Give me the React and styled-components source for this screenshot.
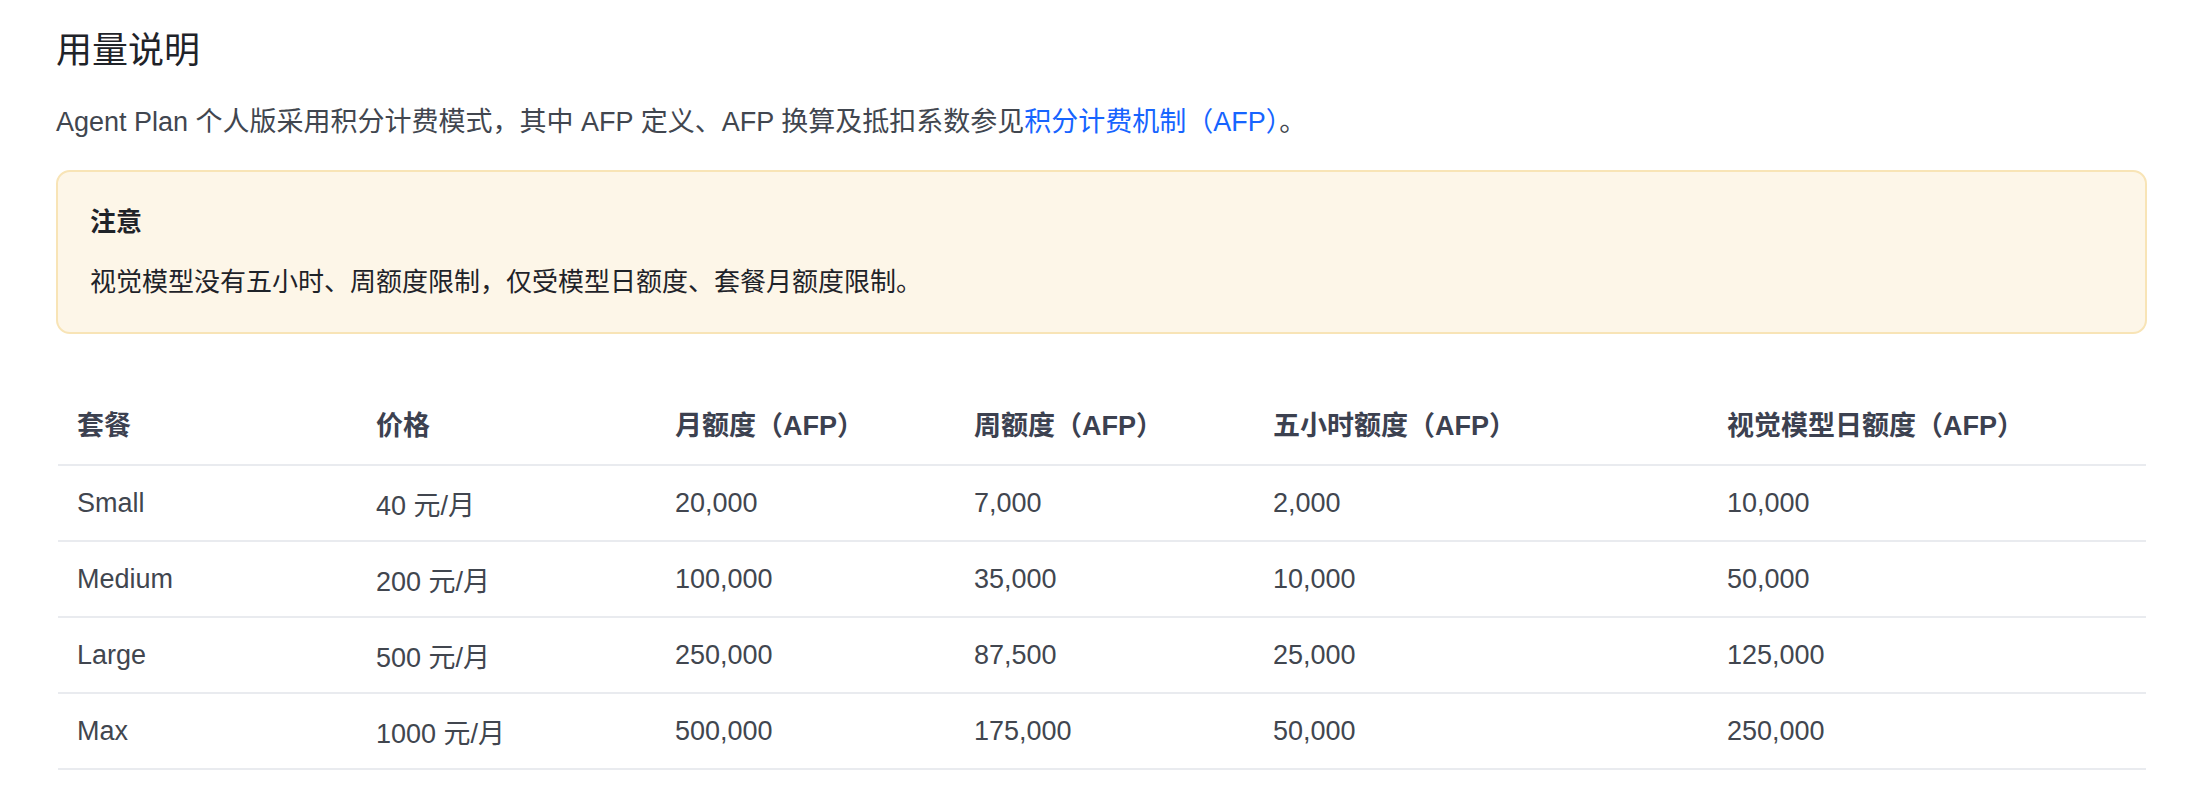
import React from "react";
import styled, { createGlobalStyle } from "styled-components";

const Global = createGlobalStyle`
  body { margin: 0; background: #fff; font-family: "Liberation Sans", "Noto Sans CJK SC", sans-serif; }
`;
const Page = styled.div`padding: 27px 38px 0 56px;`;
const Title = styled.h2`margin: 0; font-size: 36px; font-weight: 400; line-height: 48px; color: #1f2329;`;
const Para = styled.p`margin: 27px 0 0; font-size: 27px; line-height: 40px; color: #41464f;`;
const Link = styled.a`color: #1664ff; text-decoration: none;`;
const Notice = styled.div`
  margin-top: 28px; background: #fdf6e8; border: 2px solid #f8e4b6; border-radius: 14px;
  padding: 33px 32px 33px; color: #1f2329;
`;
const NoticeTitle = styled.div`font-weight: 700; font-size: 26px; line-height: 34px;`;
const NoticeText = styled.div`margin-top: 26px; font-size: 26px; line-height: 34px;`;
const Table = styled.table`
  margin-top: 48px; margin-left: 2px; width: 2088px; border-collapse: collapse; table-layout: fixed;
`;
const Th = styled.th`
  text-align: left; font-weight: 700; font-size: 27px; color: #3c4150; height: 82px; padding: 0 19px;
  border-bottom: 2px solid #e9ebef;
`;
const Td = styled.td`
  font-size: 27px; color: #41464f; height: 74px; padding: 0 19px; border-bottom: 2px solid #e9ebef;
`;

const widths = [299, 299, 299, 299, 454, 438];
const heads = ["套餐", "价格", "月额度（AFP）", "周额度（AFP）", "五小时额度（AFP）", "视觉模型日额度（AFP）"];
const rows = [
  ["Small", "40 元/月", "20,000", "7,000", "2,000", "10,000"],
  ["Medium", "200 元/月", "100,000", "35,000", "10,000", "50,000"],
  ["Large", "500 元/月", "250,000", "87,500", "25,000", "125,000"],
  ["Max", "1000 元/月", "500,000", "175,000", "50,000", "250,000"],
];

export default function App() {
  return (
    <Page>
      <Global />
      <Title>用量说明</Title>
      <Para>
        Agent Plan 个人版采用积分计费模式，其中 AFP 定义、AFP 换算及抵扣系数参见<Link href="#">积分计费机制（AFP）</Link>。
      </Para>
      <Notice>
        <NoticeTitle>注意</NoticeTitle>
        <NoticeText>视觉模型没有五小时、周额度限制，仅受模型日额度、套餐月额度限制。</NoticeText>
      </Notice>
      <Table>
        <colgroup>{widths.map((w, i) => <col key={i} style={{ width: w }} />)}</colgroup>
        <thead><tr>{heads.map(h => <Th key={h}>{h}</Th>)}</tr></thead>
        <tbody>
          {rows.map(r => <tr key={r[0]}>{r.map((c, i) => <Td key={i}>{c}</Td>)}</tr>)}
        </tbody>
      </Table>
    </Page>
  );
}
